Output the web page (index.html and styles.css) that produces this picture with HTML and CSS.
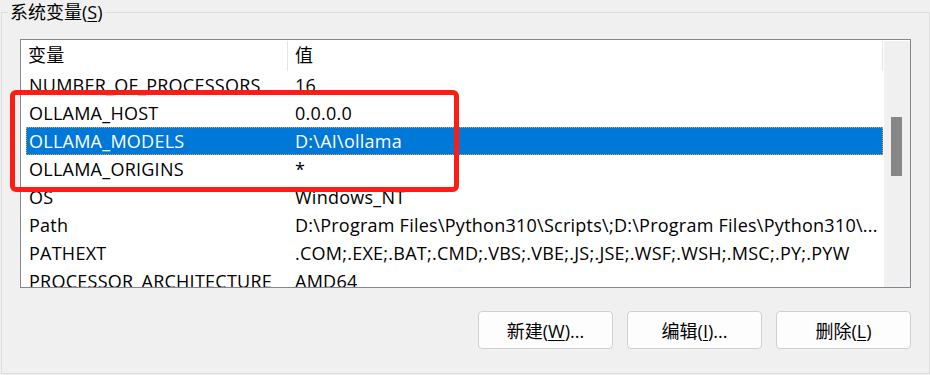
FILE: index.html
```html
<!DOCTYPE html>
<html lang="zh-CN">
<head>
<meta charset="utf-8">
<title>系统变量</title>
<link rel="stylesheet" href="styles.css">
</head>
<body>
<div class="group">
  <span class="legend">系统变量(<u>S</u>)</span>
  <div class="listview">
    <div class="list-main">
      <div class="header">
        <div class="hcell hname">变量</div>
        <div class="hcell hvalue">值</div>
      </div>
      <div class="rows">
        <div class="row"><span class="cname">NUMBER_OF_PROCESSORS</span><span class="cvalue">16</span></div>
        <div class="row"><span class="cname">OLLAMA_HOST</span><span class="cvalue">0.0.0.0</span></div>
        <div class="row selected"><span class="cname">OLLAMA_MODELS</span><span class="cvalue">D:\AI\ollama</span></div>
        <div class="row"><span class="cname">OLLAMA_ORIGINS</span><span class="cvalue">*</span></div>
        <div class="row"><span class="cname">OS</span><span class="cvalue">Windows_NT</span></div>
        <div class="row"><span class="cname">Path</span><span class="cvalue">D:\Program Files\Python310\Scripts\;D:\Program Files\Python310\...</span></div>
        <div class="row"><span class="cname">PATHEXT</span><span class="cvalue">.COM;.EXE;.BAT;.CMD;.VBS;.VBE;.JS;.JSE;.WSF;.WSH;.MSC;.PY;.PYW</span></div>
        <div class="row"><span class="cname">PROCESSOR_ARCHITECTURE</span><span class="cvalue">AMD64</span></div>
      </div>
    </div>
    <div class="scrollbar"><div class="thumb"></div></div>
  </div>
  <div class="buttons">
    <button class="btn">新建(<u>W</u>)...</button>
    <button class="btn">编辑(<u>I</u>)...</button>
    <button class="btn">删除(<u>L</u>)</button>
  </div>
</div>
<div class="annotation"></div>
</body>
</html>
```
FILE: styles.css
```css
html, body {
  margin: 0;
  padding: 0;
}
body {
  width: 930px;
  height: 375px;
  background: #f0f0f0;
  font-family: "Open Sans", "Noto Sans CJK SC", sans-serif;
  font-size: 18px;
  color: #000;
  overflow: hidden;
  position: relative;
}
.group {
  position: relative;
  margin: 12px 0 0 1px;
  width: 927px;
  height: 360px;
  border: 1px solid #dcdcdc;
  display: flex;
  flex-direction: column;
}
.legend {
  position: absolute;
  top: -13px;
  left: 6px;
  padding: 0 2px;
  background: #f0f0f0;
  line-height: 24px;
  white-space: nowrap;
}
.legend u {
  text-decoration-thickness: 1px;
  text-underline-offset: 2px;
}
.listview {
  margin: 26px 0 0 18px;
  width: 889px;
  height: 247px;
  border: 1px solid #828790;
  background: #fff;
  display: flex;
  overflow: hidden;
}
.list-main {
  width: 862px;
  display: flex;
  flex-direction: column;
  overflow: hidden;
  letter-spacing: 0.25px;
}
.header {
  height: 31px;
  display: flex;
  flex: none;
}
.hcell {
  white-space: nowrap;
  box-sizing: border-box;
  margin-top: 1px;
  line-height: 29px;
  height: 30px;
  padding-left: 7px;
  border-right: 1px solid #e5e5e5;
}
.hname {
  width: 267px;
}
.hvalue {
  width: 595px;
}
.rows {
  display: flex;
  flex-direction: column;
}
.row {
  height: 28px;
  margin-left: 5px;
  display: flex;
  align-items: center;
  white-space: nowrap;
  flex: none;
  box-sizing: border-box;
}
.cname {
  width: 261px;
  padding-left: 3px;
  box-sizing: border-box;
  overflow: hidden;
  flex: none;
}
.cvalue {
  padding-left: 8px;
  overflow: hidden;
}
.row.selected {
  background: #0078d7;
  color: #fff;
  outline: 1px dotted #f59a2c;
  outline-offset: -1px;
}
.scrollbar {
  width: 26px;
  margin: 1px 0 0 1px;
  background: #f0f0f0;
}
.thumb {
  margin: 76px 0 0 7px;
  width: 11px;
  height: 59px;
  background: #868686;
}
.buttons {
  display: flex;
  justify-content: flex-end;
  gap: 14px;
  margin-top: 23px;
  padding-right: 18px;
}
.btn {
  width: 135px;
  height: 38px;
  background: #fdfdfd;
  border: 1px solid #d0d0d0;
  border-radius: 4px;
  font-family: "Open Sans", "Noto Sans CJK SC", sans-serif;
  font-size: 18px;
  color: #000;
  padding: 0;
}
.btn u {
  text-decoration-thickness: 1px;
  text-underline-offset: 2px;
}
.annotation {
  position: absolute;
  left: 10px;
  top: 90px;
  width: 439px;
  height: 92px;
  border: 5px solid #fd1d12;
  border-radius: 6px;
}
```
